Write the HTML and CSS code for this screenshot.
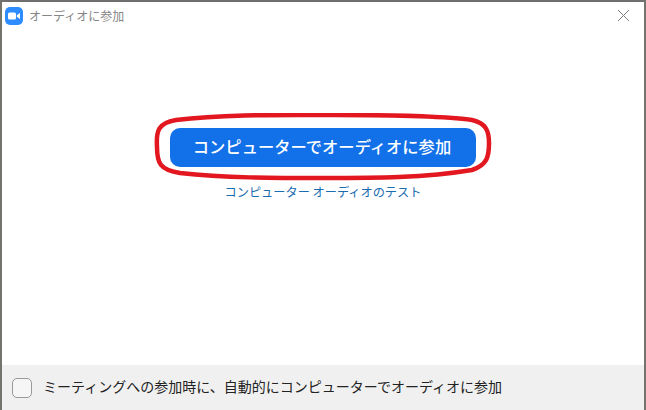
FILE: index.html
```html
<!DOCTYPE html>
<html lang="ja">
<head>
    <meta charset="UTF-8" />
    <meta name="viewport" content="width=device-width, initial-scale=1.0" />
    <title>オーディオに参加</title>
    <link rel="stylesheet" href="styles.css">
</head>
<body>
    <div class="window">
        <div class="titlebar">
            <div class="title-left">
                <svg class="app-icon" width="18" height="18" viewBox="0 0 18 18">
                    <rect width="18" height="18" rx="5" fill="#2d8cff"/>
                    <rect x="3" y="5.5" width="8" height="7" rx="1.5" fill="#fff"/>
                    <path d="M11.8 8.2 L15 6 V12 L11.8 9.8 Z" fill="#fff"/>
                </svg>
                <span class="title-text">オーディオに参加</span>
            </div>
            <svg class="close-icon" width="13" height="13" viewBox="0 0 13 13">
                <path d="M1 1 L12 12 M12 1 L1 12" stroke="#808080" stroke-width="1" fill="none"/>
            </svg>
        </div>

        <div class="main">
            <div class="join-wrap">
                <button class="join-button">コンピューターでオーディオに参加</button>
                <!-- hand drawn red marker around the button -->
                <svg class="highlight" width="338" height="68" viewBox="0 0 338 68">
                    <path d="M3 34 C2 18 4 10 22 7 C70 1 130 2 180 2 C240 2 290 3 318 7 C332 10 335 18 335 30 C335 44 333 52 318 57 C270 65 220 65 170 65 C120 65 70 65 26 60 C6 57 3 50 3 34 Z" stroke="#e2171f" stroke-width="4.5" fill="none"/>
                </svg>
            </div>
            <a class="test-link">コンピューター オーディオのテスト</a>
        </div>

        <div class="footer">
            <span class="checkbox"></span>
            <span class="footer-text">ミーティングへの参加時に、自動的にコンピューターでオーディオに参加</span>
        </div>
    </div>
</body>
</html>
```

FILE: styles.css
```css
* {
    margin: 0;
    padding: 0;
    box-sizing: border-box;
    font-family: "Noto Sans CJK JP", "Noto Sans", sans-serif;
}

body {
    width: 646px;
    height: 410px;
    overflow: hidden;
    background: #fff;
}

.window {
    height: 410px;
    display: flex;
    flex-direction: column;
    border-top: 2px solid #6f6f6f;
    border-left: 2px solid #74746c;
    border-right: 2px solid #74746c;
}

.titlebar {
    height: 30px;
    display: flex;
    align-items: center;
    justify-content: space-between;
    padding: 0 14px 3px 3px;
}

.title-left {
    display: flex;
    align-items: center;
    gap: 6px;
}

.title-text {
    font-size: 12px;
    color: #858585;
}

.main {
    flex: 1;
    display: flex;
    flex-direction: column;
    align-items: center;
    padding: 96px 0 0 0;
}

.join-wrap {
    position: relative;
}

.join-button {
    display: block;
    width: 306px;
    height: 39px;
    padding: 0 2px 3px 0;
    border: none;
    border-radius: 10px;
    background: #1270e8;
    color: #fff;
    font-size: 16.3px;
    font-weight: 500;
}

.highlight {
    position: absolute;
    top: -15px;
    left: -16px;
}

.test-link {
    margin-top: 16px;
    font-size: 12.2px;
    line-height: 18px;
    color: #1a6cb0;
}

.footer {
    height: 45px;
    display: flex;
    align-items: center;
    gap: 11px;
    padding: 0 0 0 10px;
    background: #f0f0f0;
}

.checkbox {
    width: 20px;
    height: 20px;
    background: #f6f6f6;
    border: 1.5px solid #9a9a9a;
    border-radius: 5px;
}

.footer-text {
    margin-top: -3px;
    font-size: 14px;
    color: #222;
}
```
